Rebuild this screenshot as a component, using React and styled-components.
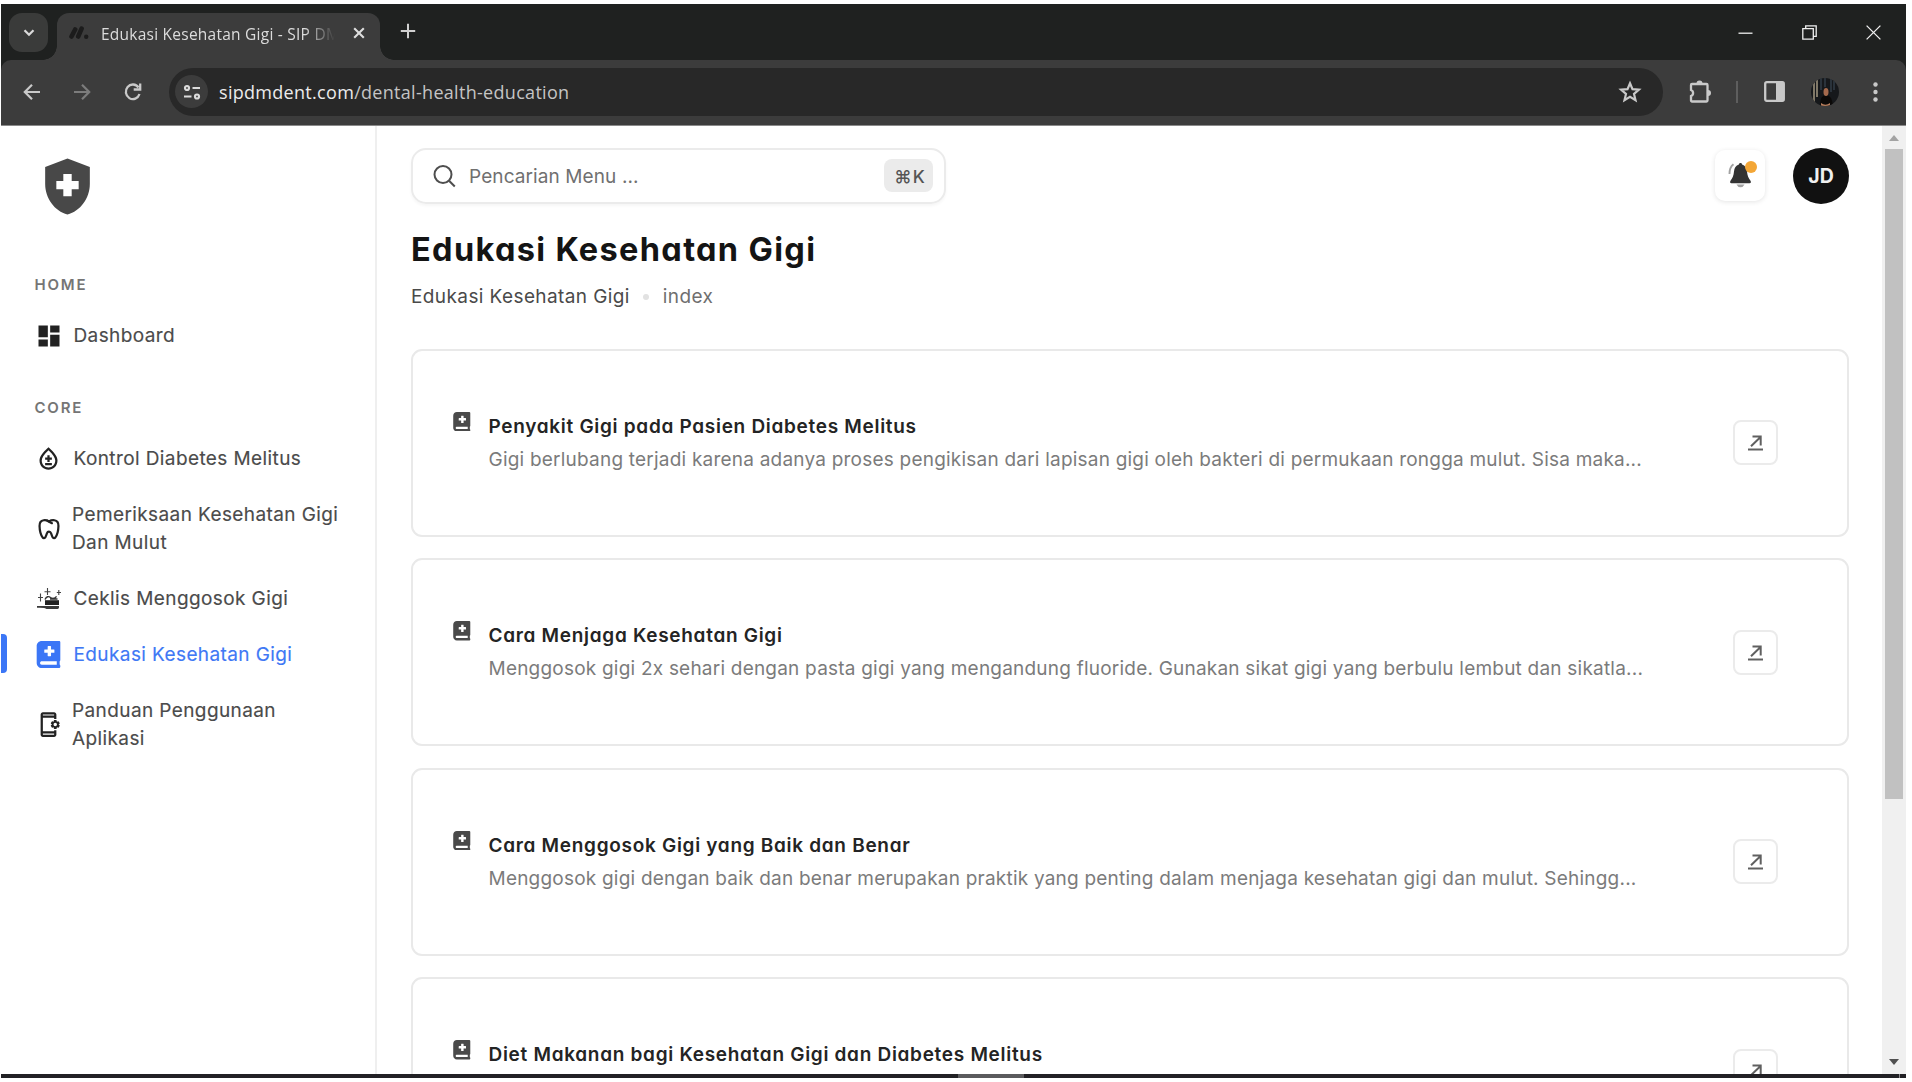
import React from 'react';
import styled, { createGlobalStyle, css } from 'styled-components';
import {
  MdDashboard,
  MdHealthAndSafety,
  MdOutlineBloodtype,
  MdOutlineAppSettingsAlt,
} from 'react-icons/md';
import { FaBookMedical } from 'react-icons/fa';

const GlobalStyle = createGlobalStyle`
  *, *::before, *::after { box-sizing: border-box; }
  body { margin: 0; background: #fff; }
  svg { display: block; flex: none; }
`;

const chromeFont = css`font-family: "Open Sans", "Noto Sans", sans-serif;`;
const headingFont = css`
  font-family: Inter, sans-serif;
  font-feature-settings: "cv11";
`;

/* ---------- window ---------- */

const Window = styled.div`
  width: 1912px;
  height: 1082px;
  padding: 4px 6px 4px 1px;
  display: flex;
  flex-direction: column;
  overflow: hidden;
  background: #fff;
  font-family: Inter, sans-serif;
`;

const TabStrip = styled.div`
  height: 56px;
  flex: none;
  display: flex;
  background: #1f2120;
`;

const TabSearch = styled.div`
  width: 39px;
  height: 39px;
  margin: 9px 9px 0 8px;
  border-radius: 13px;
  background: #3a3b3a;
  display: flex;
  align-items: center;
  justify-content: center;
`;

const Tab = styled.div`
  position: relative;
  width: 323px;
  height: 47px;
  margin-top: 9px;
  padding: 0 15px 7px 12px;
  border-radius: 12px 12px 0 0;
  background: #3c3c3c;
  display: flex;
  align-items: center;

  &::before, &::after {
    content: "";
    position: absolute;
    bottom: 0;
    width: 14px;
    height: 14px;
  }
  &::before {
    left: -14px;
    background: radial-gradient(circle at 0 0, transparent 13.5px, #3c3c3c 14px);
  }
  &::after {
    right: -14px;
    background: radial-gradient(circle at 100% 0, transparent 13.5px, #3c3c3c 14px);
  }
`;

const TabTitle = styled.div`
  ${chromeFont}
  width: 236px;
  margin: 2px 0 0 12px;
  white-space: nowrap;
  font-size: 15.5px;
  letter-spacing: 0.24px;
  line-height: 24px;
  color: #dcdcdc;
  mask-image: linear-gradient(90deg, #000 203px, transparent 234px);
`;

const TabClose = styled.div`
  margin-left: auto;
  display: flex;
`;

const NewTab = styled.div`
  width: 16px;
  margin: 0 0 2px 20px;
  display: flex;
  align-items: center;
`;

const WindowButtons = styled.div`
  margin-left: auto;
  padding: 0 25px 0 0;
  display: flex;
  align-items: center;
  gap: 49px;
`;

const ToolbarBack = styled.div`
  flex: none;
  background: #1f2120;
`;

const Toolbar = styled.div`
  height: 66px;
  padding: 0 28px 2px 20px;
  border-radius: 10px 10px 0 0;
  border-bottom: 1px solid #8a8a8a;
  background: #3c3c3c;
  display: flex;
  align-items: center;
`;

const NavButtons = styled.div`
  display: flex;
  align-items: center;
  gap: 27px;
`;

const AddressBar = styled.div`
  width: 1494px;
  height: 48px;
  margin-left: 26px;
  padding: 0 21px 0 6px;
  border-radius: 24px;
  background: #282828;
  display: flex;
  align-items: center;
`;

const SiteInfo = styled.div`
  width: 33px;
  height: 33px;
  border-radius: 50%;
  background: #3c3c3c;
  display: flex;
  align-items: center;
  justify-content: center;
`;

const Url = styled.div`
  ${chromeFont}
  flex: 1;
  margin-left: 11px;
  font-size: 18px;
  letter-spacing: 0.3px;
  line-height: 26px;
  color: #c4c4c4;
`;

const UrlHost = styled.span`color: #ececec;`;

const ToolbarActions = styled.div`
  margin-left: auto;
  display: flex;
  align-items: center;
`;

const Divider = styled.div`
  width: 2px;
  height: 22px;
  margin: 0 26px 0 23px;
  background: #5e5e5e;
`;

const Profile = styled.div`
  width: 28px;
  height: 28px;
  margin: 0 34px 0 26px;
  border-radius: 50%;
  overflow: hidden;
`;

/* ---------- page ---------- */

const Page = styled.div`
  flex: 1;
  min-height: 0;
  display: flex;
  overflow: hidden;
  background: #fff;
`;

const Sidebar = styled.aside`
  width: 376px;
  flex: none;
  padding-top: 27px;
  border-right: 2px solid #efefef;
`;

const Logo = styled.div`
  margin: 0 0 56px 33px;
  color: #484848;
`;

const Group = styled.nav`
  margin-bottom: 35px;
`;

const GroupLabel = styled.div`
  ${headingFont}
  margin: 0 0 14px 33.5px;
  font-size: 15px;
  font-weight: 600;
  letter-spacing: 1.8px;
  line-height: 18px;
  color: #757575;
`;

const NavItem = styled.a`
  position: relative;
  padding: 14px 0 14px 33.5px;
  display: flex;
  align-items: center;
  gap: ${(p) => (p.$wrapped ? 9.5 : 11)}px;
  font-size: 19px;
  letter-spacing: 0.4px;
  line-height: 27.95px;
  color: ${(p) => (p.$active ? '#4078f5' : '#4b4b4b')};
  -webkit-text-stroke: 0.15px currentColor;

  ${(p) =>
    p.$active &&
    css`
      &::before {
        content: "";
        position: absolute;
        left: 0;
        top: 7px;
        width: 6px;
        height: 39px;
        border-radius: 0 4px 4px 0;
        background: #3b76f6;
      }
    `}
`;

const NavIcon = styled.span`
  width: 28px;
  flex: none;
  display: flex;
  justify-content: center;
  color: ${(p) => (p.$active ? '#3b76f6' : '#222')};
`;

const NavText = styled.span`
  width: 274px;
`;

const Main = styled.main`
  flex: 1;
  min-width: 0;
  padding: 22px 33px 0 34px;
  display: flex;
  flex-direction: column;
`;

const TopBar = styled.header`
  height: 55px;
  flex: none;
  display: flex;
  align-items: center;
`;

const Search = styled.div`
  width: 535px;
  height: 56px;
  padding: 0 11px 0 20px;
  border: 2px solid #ebebeb;
  border-radius: 15px;
  box-shadow: 0 2px 3px rgba(0, 0, 0, 0.04);
  display: flex;
  align-items: center;
`;

const Placeholder = styled.span`
  flex: 1;
  margin-left: 12px;
  padding-top: 1px;
  font-size: 19px;
  letter-spacing: 0.1px;
  color: #707070;
`;

const Shortcut = styled.kbd`
  width: 49px;
  height: 33px;
  padding: 1px 0 0 2px;
  border-radius: 8px;
  background: #ebebeb;
  display: flex;
  align-items: center;
  justify-content: center;
  gap: 1px;
  font: 500 17.5px Inter, sans-serif;
  color: #555;
`;

const BellButton = styled.div`
  position: relative;
  width: 50px;
  height: 51px;
  margin-left: auto;
  border-radius: 10px;
  box-shadow: 0 1px 5px rgba(0, 0, 0, 0.11);
  display: flex;
  align-items: center;
  justify-content: center;
`;

const BellDot = styled.span`
  position: absolute;
  top: 11px;
  right: 8px;
  width: 12px;
  height: 12px;
  border-radius: 50%;
  background: #f3a636;
`;

const Avatar = styled.div`
  width: 56px;
  height: 56px;
  margin-left: 28px;
  border-radius: 50%;
  background: #111;
  display: flex;
  align-items: center;
  justify-content: center;
  font-size: 19.5px;
  font-weight: 700;
  color: #f0f0f0;
`;

const Title = styled.h1`
  ${headingFont}
  margin: 24.5px 0 0;
  font-size: 32.5px;
  font-weight: 650;
  letter-spacing: 1.33px;
  line-height: 44px;
  color: #141414;
`;

const Breadcrumb = styled.div`
  margin-top: 11px;
  display: flex;
  align-items: center;
  font-size: 19px;
  letter-spacing: 0.4px;
  line-height: 28px;
  color: #4a4a4a;
`;

const Crumb = styled.span`color: #6f6f6f;`;

const Bullet = styled.span`
  width: 6px;
  height: 6px;
  margin: 0 14px 0 13px;
  border-radius: 50%;
  background: #e2e2e2;
`;

const CardList = styled.div`
  margin-top: 38px;
  display: flex;
  flex-direction: column;
  gap: 21.5px;
`;

const Card = styled.article`
  height: 188px;
  flex: none;
  padding: 0 69px 0 39px;
  border: 2px solid #e9e9e9;
  border-radius: 11px;
  display: flex;
  align-items: center;
`;

const CardIcon = styled.div`
  align-self: flex-start;
  margin-top: 61px;
  color: #4a4a4a;
`;

const CardBody = styled.div`
  flex: 1;
  margin-left: 17px;
  padding-top: 1px;
  white-space: nowrap;
`;

const CardTitle = styled.h2`
  ${headingFont}
  margin: 0;
  font-size: 19px;
  font-weight: 600;
  letter-spacing: 0.7px;
  line-height: 33px;
  color: #242424;
`;

const CardText = styled.p`
  margin: 0;
  font-size: 19px;
  letter-spacing: 0.215px;
  line-height: 34px;
  color: #7b7b7b;
`;

const OpenButton = styled.button`
  width: 45px;
  height: 45px;
  padding: 1px 0 0;
  border: 2px solid #ebebeb;
  border-radius: 8px;
  background: #fff;
  color: #606060;
  display: flex;
  align-items: center;
  justify-content: center;
`;

const Scrollbar = styled.div`
  width: 24px;
  flex: none;
  padding: 9px 3px 9px;
  background: #f0f0f0;
  display: flex;
  flex-direction: column;
  align-items: center;
`;

const Thumb = styled.div`
  width: 18px;
  height: 650px;
  margin: 8px 0 auto;
  background: #c1c1c1;
`;

const Taskbar = styled.div`
  height: 4px;
  flex: none;
  display: flex;
  background: #222125;
`;

const TaskbarActive = styled.div`
  width: 66px;
  margin-left: 957px;
  background: #5b5b5d;
`;

const TaskbarEdge = styled.div`
  width: 1px;
  margin: 0 6px 0 auto;
  background: #8a8a8c;
`;

/* ---------- drawings ---------- */

const stroke = (width, color = 'currentColor') => ({
  fill: 'none',
  stroke: color,
  strokeWidth: width,
});

const Brand = () => (
  <svg width="20" height="14" viewBox="0 0 20 14">
    <path d="M2.500 10.500 6.200 3.500M9.200 10.500 12.600 2.700" {...stroke(4.600, '#1c1c1c')} strokeLinecap="round" />
    <circle cx="17.200" cy="10.800" r="2.200" fill="#1c1c1c" />
  </svg>
);

const Tooth = () => (
  <svg width="28" height="28" viewBox="0 0 24 24" {...stroke(1.9)} strokeLinecap="round" strokeLinejoin="round">
    <path d="M12 5.500c-1.300-.8-2.900-1.200-4.600-1C5 4.800 3.800 6.500 3.900 9.500c.1 4.500 1.100 7.700 2.600 9.700.6.900 1.900.8 2.400-.2.500-.9.800-1.800 1.300-3.200.3-.9 1-1.500 1.800-1.500s1.500.6 1.800 1.500c.5 1.400.8 2.300 1.300 3.200.5 1 1.800 1.100 2.400.2 1.500-2 2.500-5.200 2.600-9.700.1-3-1.100-4.700-3.500-5-1.700-.2-3.300.2-4.600 1z" />
    <path d="m10.500 5 4 2" />
  </svg>
);

const Brush = () => (
  <svg width="24" height="22" viewBox="0 0 24 22">
    <path d="M0 18h22v1.600a1.400 1.400 0 0 1-1.400 1.400H9.500q-1.500-1.500-9.500-1.200z" fill="#3a3a3a" />
    <path d="M8 12.200h14V17H8z" fill="#222" />
    <path d="M8 11.500c1.500-3 3.500-3.600 5.500-2 2 1.300 4.500 1.200 6-1.200M13 11h7.500" {...stroke(1.400, '#333')} />
    <path d="M10.500 0v7M7.500 3.700h6M3.500 5.500v8M1 9.500h5M21.800 2v5M19.800 4.500h4.200" {...stroke(1.100, '#444')} />
  </svg>
);

const Bell = () => (
  <svg width="24" height="27" viewBox="0 0 24 27">
    <path d="M12.500 1c.9 0 1.500.6 1.600 1.400 3 1 4.600 3.400 4.900 7 .3 4.200 1.500 6.600 3.500 9.400.8 1.300.4 2.400-.9 2.400H3.400c-1.300 0-1.700-1.100-.9-2.400C4.500 16 5.700 13.600 6 9.400c.3-3.600 1.900-6 4.900-7C11 1.600 11.600 1 12.500 1z" fill="#333" />
    <path d="M8.500 22.500h8q-1.200 2.700-4 2.700t-4-2.700z" fill="#a2a2a2" />
    <path d="M1.500 12C1.500 7.500 2.800 4.300 5.500 2.300" {...stroke(1.900, '#a2a2a2')} />
  </svg>
);

const OpenArrow = () => (
  <svg width="15" height="16" viewBox="0 0 15 16" {...stroke(2)}>
    <path d="M4.500 1.500H12.700V10.500M12.300 2.200 3 11.200" />
    <path d="M0 14.500h15" />
  </svg>
);

const Portrait = () => (
  <svg width="28" height="28" viewBox="0 0 28 28">
    <rect width="28" height="28" fill="#16181b" />
    <path d="M3 2v24M6 1v18" {...stroke(1.800, '#8c8371')} />
    <path d="M10 0v12M14 0v9M20 1v13M23 3v9" {...stroke(1.200, '#3a4653')} />
    <path d="M9 28q0-11 6-11t7 11z" fill="#0b0908" />
    <ellipse cx="15" cy="14" rx="2.500" ry="4" fill="#a4694c" />
    <path d="M10 25q4.500 3.500 9 0v3h-9z" fill="#b57d5c" />
  </svg>
);

/* ---------- data ---------- */

const coreItems = [
  { label: 'Kontrol Diabetes Melitus', icon: <MdOutlineBloodtype size={27} /> },
  { label: 'Pemeriksaan Kesehatan Gigi Dan Mulut', icon: <Tooth />, wrapped: true },
  { label: 'Ceklis Menggosok Gigi', icon: <Brush /> },
  { label: 'Edukasi Kesehatan Gigi', icon: <FaBookMedical size={27} />, active: true },
  { label: 'Panduan Penggunaan Aplikasi', icon: <MdOutlineAppSettingsAlt size={27} />, wrapped: true },
];

const articles = [
  {
    title: 'Penyakit Gigi pada Pasien Diabetes Melitus',
    text: 'Gigi berlubang terjadi karena adanya proses pengikisan dari lapisan gigi oleh bakteri di permukaan rongga mulut. Sisa maka...',
  },
  {
    title: 'Cara Menjaga Kesehatan Gigi',
    text: 'Menggosok gigi 2x sehari dengan pasta gigi yang mengandung fluoride. Gunakan sikat gigi yang berbulu lembut dan sikatla...',
  },
  {
    title: 'Cara Menggosok Gigi yang Baik dan Benar',
    text: 'Menggosok gigi dengan baik dan benar merupakan praktik yang penting dalam menjaga kesehatan gigi dan mulut. Sehingg...',
  },
  { title: 'Diet Makanan bagi Kesehatan Gigi dan Diabetes Melitus', text: '' },
];

/* ---------- sections ---------- */

function BrowserChrome() {
  return (
    <>
      <TabStrip>
        <TabSearch>
          <svg width="12" height="8" viewBox="0 0 12 8" {...stroke(2.200, '#dadada')}>
            <path d="m1.500 1.200 4.500 4.600 4.500-4.600" />
          </svg>
        </TabSearch>
        <Tab>
          <Brand />
          <TabTitle>Edukasi Kesehatan Gigi - SIP DM</TabTitle>
          <TabClose>
            <svg width="12" height="12" viewBox="0 0 12 12" {...stroke(2.100, '#dedede')}>
              <path d="m1.200 1.200 9.600 9.600M10.800 1.200l-9.600 9.600" />
            </svg>
          </TabClose>
        </Tab>
        <NewTab>
          <svg width="16" height="16" viewBox="0 0 16 16" {...stroke(2, '#d0d0d0')}>
            <path d="M8 .8v14.400M.8 8h14.400" />
          </svg>
        </NewTab>
        <WindowButtons>
          <svg width="15" height="15" viewBox="0 0 15 15" {...stroke(1.300, '#f0f0f0')}>
            <path d="M.5 8.200h14" />
          </svg>
          <svg width="15" height="15" viewBox="0 0 15 15" {...stroke(1.300, '#f0f0f0')}>
            <path d="M.8 3.700h10.500v10.500H.8zM3.700 3.500V.8h10.500v10.500h-2.700" />
          </svg>
          <svg width="15" height="15" viewBox="0 0 15 15" {...stroke(1.300, '#f0f0f0')}>
            <path d="m.6.6 13.800 13.800M14.400.6.6 14.400" />
          </svg>
        </WindowButtons>
      </TabStrip>
      <ToolbarBack>
        <Toolbar>
          <NavButtons>
            <svg width="24" height="18" viewBox="0 0 24 18" {...stroke(2.200, '#c9c9c9')}>
              <path d="M19 9H4.500M11 1.800 3.800 9l7.200 7.200" />
            </svg>
            <svg width="24" height="18" viewBox="0 0 24 18" {...stroke(2.200, '#7c7c7c')}>
              <path d="M2 9h14.500M10 1.800 17.200 9 10 16.200" />
            </svg>
            <svg width="20" height="20" viewBox="0 0 20 20" {...stroke(2.300, '#c9c9c9')}>
              <path d="M15.500 5.500A7 7.300 0 1 0 16.500 12M17.200 1.500v6H10.700" />
            </svg>
          </NavButtons>
          <AddressBar>
            <SiteInfo>
              <svg width="18" height="16" viewBox="0 0 18 16" {...stroke(2.200, '#dcdcdc')}>
                <circle cx="4" cy="4" r="2" />
                <path d="M9.500 4H17M1 12.500h7.500" />
                <circle cx="14" cy="12.500" r="2" />
              </svg>
            </SiteInfo>
            <Url>
              <UrlHost>sipdmdent.com</UrlHost>/dental-health-education
            </Url>
            <svg width="24" height="24" viewBox="0 0 24 24" {...stroke(2.200, '#c9c9c9')}>
              <path d="m12 3.300 2.500 5.900 6.400.5-4.900 4.200 1.500 6.200L12 16.800l-5.500 3.300L8 13.900 3.100 9.700l6.400-.5z" />
            </svg>
          </AddressBar>
          <ToolbarActions>
            <svg width="25" height="25" viewBox="0 0 25 25" {...stroke(2.300, '#c9c9c9')}>
              <path d="M4 5h14.500a1 1 0 0 1 1 1v15.500a1 1 0 0 1-1 1H4a1 1 0 0 1-1-1V17a3.200 3.200 0 0 0 0-6V6a1 1 0 0 1 1-1z" />
              <path d="M8.500 4.500a3 3 0 0 1 6 0zM20 11a3 3 0 0 1 0 6z" fill="#c9c9c9" stroke="none" />
            </svg>
            <Divider />
            <svg width="21" height="21" viewBox="0 0 21 21">
              <rect x="1.200" y="1.200" width="18.600" height="18.600" rx="1.500" {...stroke(2.300, '#c9c9c9')} />
              <path d="M12 1h8v19h-8z" fill="#c9c9c9" />
            </svg>
            <Profile>
              <Portrait />
            </Profile>
            <svg width="5" height="20" viewBox="0 0 5 20" fill="#c9c9c9">
              <circle cx="2.500" cy="2.500" r="2.200" />
              <circle cx="2.500" cy="10" r="2.200" />
              <circle cx="2.500" cy="17.500" r="2.200" />
            </svg>
          </ToolbarActions>
        </Toolbar>
      </ToolbarBack>
    </>
  );
}

function SideNav() {
  return (
    <Sidebar>
      <Logo>
        <MdHealthAndSafety size={67} />
      </Logo>
      <Group>
        <GroupLabel>HOME</GroupLabel>
        <NavItem>
          <NavIcon>
            <MdDashboard size={28} />
          </NavIcon>
          <NavText>Dashboard</NavText>
        </NavItem>
      </Group>
      <Group>
        <GroupLabel>CORE</GroupLabel>
        {coreItems.map((item) => (
          <NavItem key={item.label} $active={item.active} $wrapped={item.wrapped}>
            <NavIcon $active={item.active}>{item.icon}</NavIcon>
            <NavText>{item.label}</NavText>
          </NavItem>
        ))}
      </Group>
    </Sidebar>
  );
}

export default function App() {
  return (
    <Window>
      <GlobalStyle />
      <BrowserChrome />
      <Page>
        <SideNav />
        <Main>
          <TopBar>
            <Search>
              <svg width="24" height="24" viewBox="0 0 24 24" {...stroke(2, '#4e4e4e')}>
                <circle cx="10" cy="10.500" r="8.500" />
                <path d="m16.300 17 5.500 5.500" />
              </svg>
              <Placeholder>Pencarian Menu ...</Placeholder>
              <Shortcut>
                <span>⌘</span>
                <span>K</span>
              </Shortcut>
            </Search>
            <BellButton>
              <Bell />
              <BellDot />
            </BellButton>
            <Avatar>JD</Avatar>
          </TopBar>
          <Title>Edukasi Kesehatan Gigi</Title>
          <Breadcrumb>
            Edukasi Kesehatan Gigi
            <Bullet />
            <Crumb>index</Crumb>
          </Breadcrumb>
          <CardList>
            {articles.map((a) => (
              <Card key={a.title}>
                <CardIcon>
                  <FaBookMedical size={19.5} />
                </CardIcon>
                <CardBody>
                  <CardTitle>{a.title}</CardTitle>
                  <CardText>{a.text || '\u00a0'}</CardText>
                </CardBody>
                <OpenButton>
                  <OpenArrow />
                </OpenButton>
              </Card>
            ))}
          </CardList>
        </Main>
        <Scrollbar>
          <svg width="10" height="6" viewBox="0 0 10 6">
            <path d="m5 0 5 6H0z" fill="#a3a3a3" />
          </svg>
          <Thumb />
          <svg width="10" height="6" viewBox="0 0 10 6">
            <path d="M0 0h10L5 6z" fill="#505050" />
          </svg>
        </Scrollbar>
      </Page>
      <Taskbar>
        <TaskbarActive />
        <TaskbarEdge />
      </Taskbar>
    </Window>
  );
}
